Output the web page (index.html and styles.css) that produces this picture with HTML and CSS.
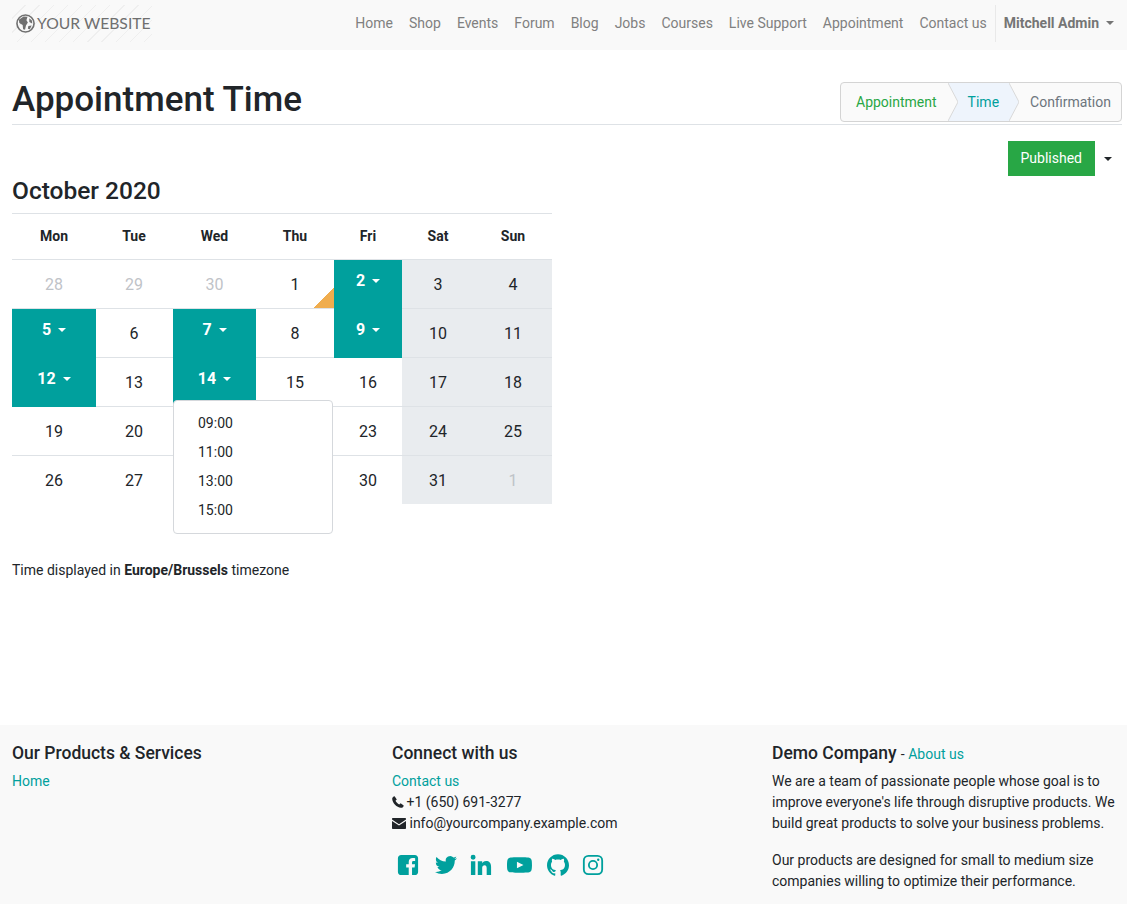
FILE: index.html
```html
<!DOCTYPE html>
<html lang="en">

<head>
    <meta charset="UTF-8">
    <meta name="viewport" content="width=device-width, initial-scale=1.0">
    <title>Appointment Time</title>
    <link rel="stylesheet" href="styles.css">
</head>

<body>
    <header class="navbar">
        <a class="logo" href="#">
            <svg class="logo-globe" viewBox="0 0 20 20">
                <circle cx="10" cy="10" r="9" fill="none" stroke="#707070" stroke-width="1.700"></circle>
                <path d="M3 6 L8 2.500 L12 3 L11 6.500 L12.500 9 L10.500 12 L9.500 16.500 L7.500 16 L7 11.500 L3.500 9.500 Z" fill="#707070"></path>
                <path d="M14 4.500 L17 7 L17 10 L14 8.500 Z M13 12.500 L16.500 12 L14.500 16 L12.500 15.500 Z" fill="#707070"></path>
            </svg>
            <span>YOUR WEBSITE</span>
        </a>
        <nav class="nav-links">
            <a href="#">Home</a>
            <a href="#">Shop</a>
            <a href="#">Events</a>
            <a href="#">Forum</a>
            <a href="#">Blog</a>
            <a href="#">Jobs</a>
            <a href="#">Courses</a>
            <a href="#">Live Support</a>
            <a href="#">Appointment</a>
            <a href="#">Contact us</a>
        </nav>
        <a class="nav-user" href="#">Mitchell Admin<span class="caret"></span></a>
    </header>

    <main class="page">
        <div class="title-row">
            <h1>Appointment Time</h1>
            <div class="wizard">
                <span class="step step-done">Appointment</span>
                <svg class="step-sep" viewBox="0 0 10 40" preserveAspectRatio="none">
                    <path d="M0 0 L10 20 L0 40 Z" fill="#fafafa"></path>
                    <path d="M0 0 L10 0 L10 40 L0 40 L10 20 Z" fill="#eef4fc"></path>
                    <path d="M0 0 L10 20 L0 40" fill="none" stroke="#d8d8d8"></path>
                </svg>
                <span class="step step-active">Time</span>
                <svg class="step-sep" viewBox="0 0 10 40" preserveAspectRatio="none">
                    <path d="M0 0 L10 20 L0 40 Z" fill="#eef4fc"></path>
                    <path d="M0 0 L10 0 L10 40 L0 40 L10 20 Z" fill="#fafafa"></path>
                    <path d="M0 0 L10 20 L0 40" fill="none" stroke="#d8d8d8"></path>
                </svg>
                <span class="step step-last">Confirmation</span>
            </div>
        </div>

        <div class="publish-row">
            <a class="btn-published" href="#">Published</a>
            <span class="caret caret-dark"></span>
        </div>

        <h2>October 2020</h2>
        <table class="calendar">
            <thead>
                <tr>
                    <th>Mon</th><th>Tue</th><th>Wed</th><th>Thu</th><th>Fri</th><th>Sat</th><th>Sun</th>
                </tr>
            </thead>
            <tbody>
                <tr>
                    <td class="muted">28</td>
                    <td class="muted">29</td>
                    <td class="muted">30</td>
                    <td class="today">1</td>
                    <td class="open"><a href="#">2<span class="caret"></span></a></td>
                    <td class="weekend">3</td>
                    <td class="weekend">4</td>
                </tr>
                <tr>
                    <td class="open"><a href="#">5<span class="caret"></span></a></td>
                    <td>6</td>
                    <td class="open"><a href="#">7<span class="caret"></span></a></td>
                    <td>8</td>
                    <td class="open"><a href="#">9<span class="caret"></span></a></td>
                    <td class="weekend">10</td>
                    <td class="weekend">11</td>
                </tr>
                <tr>
                    <td class="open"><a href="#">12<span class="caret"></span></a></td>
                    <td>13</td>
                    <td class="open has-menu">
                        <a href="#">14<span class="caret"></span></a>
                        <div class="time-menu">
                            <a href="#">09:00</a>
                            <a href="#">11:00</a>
                            <a href="#">13:00</a>
                            <a href="#">15:00</a>
                        </div>
                    </td>
                    <td>15</td>
                    <td>16</td>
                    <td class="weekend">17</td>
                    <td class="weekend">18</td>
                </tr>
                <tr>
                    <td>19</td>
                    <td>20</td>
                    <td></td>
                    <td></td>
                    <td>23</td>
                    <td class="weekend">24</td>
                    <td class="weekend">25</td>
                </tr>
                <tr>
                    <td>26</td>
                    <td>27</td>
                    <td></td>
                    <td></td>
                    <td>30</td>
                    <td class="weekend">31</td>
                    <td class="weekend muted">1</td>
                </tr>
            </tbody>
        </table>

        <p class="timezone">Time displayed in <b>Europe/Brussels</b> timezone</p>
    </main>

    <footer class="footer">
        <div class="footer-col">
            <h5>Our Products &amp; Services</h5>
            <a href="#">Home</a>
        </div>
        <div class="footer-col">
            <h5>Connect with us</h5>
            <a href="#">Contact us</a>
            <div class="contact-line">
                <svg class="contact-icon" viewBox="0 0 12 12">
                    <path d="M2.600 0.300 L4.800 3.400 L3.500 4.800 C4.100 6.100 5.700 7.800 7.200 8.500 L8.600 7.200 L11.700 9.400 C11.600 10.700 10.300 11.900 9 11.800 C4.600 11.400 0.500 7.200 0.200 3 C0.100 1.700 1.300 0.400 2.600 0.300 Z" fill="#212529"></path>
                </svg>
                +1 (650) 691-3277
            </div>
            <div class="contact-line">
                <svg class="contact-icon contact-mail" viewBox="0 0 14 11">
                    <path d="M1 0 H13 C13.600 0 14 .4 14 1 V1.600 L7 6.200 L0 1.600 V1 C0 .4 .4 0 1 0 Z M0 3 L7 7.600 L14 3 V10 C14 10.600 13.600 11 13 11 H1 C.4 11 0 10.600 0 10 Z" fill="#212529"></path>
                </svg>
                info@yourcompany.example.com
            </div>
            <div class="social">
                <svg viewBox="0 0 24 24"><path fill-rule="evenodd" d="M4.500 1 H19.500 C21.500 1 23 2.500 23 4.500 V19.500 C23 21.500 21.500 23 19.500 23 H16.400 V14.600 H19.200 L19.700 11.200 H16.400 V9.200 C16.400 8.200 16.800 7.600 18 7.600 H19.800 V4.600 C19.200 4.500 18.200 4.400 17 4.400 C14.500 4.400 12.800 5.900 12.800 8.700 V11.200 H10 V14.600 H12.800 V23 H4.500 C2.500 23 1 21.500 1 19.500 V4.500 C1 2.500 2.500 1 4.500 1 Z"></path></svg>
                <svg viewBox="0 0 24 24"><path d="M23.953 4.57a10 10 0 01-2.825.775 4.958 4.958 0 002.163-2.723c-.951.555-2.005.959-3.127 1.184a4.92 4.92 0 00-8.384 4.482C7.69 8.095 4.067 6.13 1.64 3.162a4.822 4.822 0 00-.666 2.475c0 1.71.87 3.213 2.188 4.096a4.904 4.904 0 01-2.228-.616v.06a4.923 4.923 0 003.946 4.827 4.996 4.996 0 01-2.212.085 4.936 4.936 0 004.604 3.417 9.867 9.867 0 01-6.102 2.105c-.39 0-.779-.023-1.17-.067a13.995 13.995 0 007.557 2.209c9.053 0 13.998-7.496 13.998-13.985 0-.21 0-.42-.015-.63A9.935 9.935 0 0024 4.59z"></path></svg>
                <svg viewBox="0 0 24 24"><path d="M23 23h-4.800v-7.500c0-1.900-.7-3.200-2.300-3.200-1.300 0-2.100.9-2.400 1.700-.1.300-.2.700-.2 1.200V23H8.500V8h4.800v2.100c.6-1 1.800-2.400 4.300-2.400 3.200 0 5.400 2.100 5.400 6.500V23zM3.400 6.200a2.700 2.700 0 110-5.400 2.700 2.700 0 010 5.400zM5.800 23H1V8h4.800v15z"></path></svg>
                <svg class="social-wide" viewBox="0 0 24 24" preserveAspectRatio="none"><path d="M23.498 6.186a3.016 3.016 0 0 0-2.122-2.136C19.505 3.545 12 3.545 12 3.545s-7.505 0-9.377.505A3.017 3.017 0 0 0 .502 6.186C0 8.07 0 12 0 12s0 3.93.502 5.814a3.016 3.016 0 0 0 2.122 2.136c1.871.505 9.376.505 9.376.505s7.505 0 9.377-.505a3.015 3.015 0 0 0 2.122-2.136C24 15.93 24 12 24 12s0-3.93-.502-5.814zM9.545 15.568V8.432L15.818 12l-6.273 3.568z"></path></svg>
                <svg viewBox="0 0 24 24"><path d="M12 .297c-6.63 0-12 5.373-12 12 0 5.303 3.438 9.8 8.205 11.385.6.113.82-.258.82-.577 0-.285-.01-1.04-.015-2.04-3.338.724-4.042-1.61-4.042-1.61C4.422 18.07 3.633 17.7 3.633 17.7c-1.087-.744.084-.729.084-.729 1.205.084 1.838 1.236 1.838 1.236 1.07 1.835 2.809 1.305 3.495.998.108-.776.417-1.305.76-1.605-2.665-.3-5.466-1.332-5.466-5.93 0-1.31.465-2.38 1.235-3.22-.135-.303-.54-1.523.105-3.176 0 0 1.005-.322 3.3 1.23.96-.267 1.98-.399 3-.405 1.02.006 2.04.138 3 .405 2.28-1.552 3.285-1.23 3.285-1.23.645 1.653.24 2.873.12 3.176.765.84 1.23 1.91 1.23 3.22 0 4.61-2.805 5.625-5.475 5.92.42.36.81 1.096.81 2.22 0 1.606-.015 2.896-.015 3.286 0 .315.21.69.825.57C20.565 22.092 24 17.592 24 12.297c0-6.627-5.373-12-12-12"></path></svg>
                <svg viewBox="0 0 24 24">
                    <rect x="2" y="2" width="20" height="20" rx="5" fill="none" stroke="#00a09d" stroke-width="2"></rect>
                    <circle cx="12" cy="12" r="4.500" fill="none" stroke="#00a09d" stroke-width="2"></circle>
                    <circle cx="17.700" cy="6.300" r="1.300"></circle>
                </svg>
            </div>
        </div>
        <div class="footer-col">
            <h5 class="company">Demo Company <small>- <a href="#">About us</a></small></h5>
            <p>We are a team of passionate people whose goal is to improve everyone's life through disruptive products. We build great products to solve your business problems.</p>
            <p>Our products are designed for small to medium size companies willing to optimize their performance.</p>
        </div>
    </footer>
</body>

</html>
```

FILE: styles.css
```css
html,
body {
    height: 904px;
    overflow: hidden;
}

body {
    margin: 0;
    font-family: Roboto, "Noto Sans", sans-serif;
    font-size: 14px;
    line-height: 21px;
    color: #212529;
    background-color: #ffffff;
}

a {
    color: #00a09d;
    text-decoration: none;
}

.caret {
    display: inline-block;
    margin-left: 8px;
    vertical-align: 3px;
    border-top: 4px solid currentColor;
    border-left: 4px solid transparent;
    border-right: 4px solid transparent;
}

/* navbar */
.navbar {
    display: flex;
    align-items: flex-start;
    height: 50px;
    padding: 0 4px 0 12px;
    background-color: #f9f9f9;
}

.logo {
    display: flex;
    align-items: center;
    box-sizing: border-box;
    width: 140px;
    height: 37px;
    margin-top: 5px;
    padding-left: 4px;
    color: #6f6f6f;
    font-family: Lato, sans-serif;
    font-size: 15.7px;
    white-space: nowrap;
    background-image: repeating-linear-gradient(135deg, transparent 0, transparent 9px, #efefef 9px, #efefef 10px);
}

.logo-globe {
    flex: none;
    width: 19px;
    height: 19px;
    margin-right: 2px;
}

.nav-links {
    display: flex;
    margin-left: auto;
    padding-top: 5px;
}

.nav-links a {
    padding: 8px;
    color: #808080;
}

.nav-user {
    display: block;
    margin-top: 5px;
    padding: 8px 9px 8px 8px;
    color: #757575;
    font-weight: 700;
    border-left: 1px solid #e9e9e9;
}

.nav-user .caret {
    margin-left: 7px;
}

/* title and wizard */
.page {
    box-sizing: border-box;
    width: 1110px;
    height: 675px;
    margin-left: 12px;
}

.title-row {
    display: flex;
    justify-content: space-between;
    align-items: flex-start;
    height: 74px;
    border-bottom: 1px solid #dee2e6;
}

h1 {
    margin: 27px 0 0;
    font-size: 35px;
    line-height: 46px;
    font-weight: 500;
}

.wizard {
    display: flex;
    align-items: stretch;
    height: 38px;
    margin-top: 32px;
    border: 1px solid #d4d4d4;
    border-radius: 4px;
    background-color: #fafafa;
}

.step {
    padding: 9px 10px 0;
    color: #6c757d;
}

.step-done {
    padding-left: 15px;
    padding-right: 11px;
    color: #28a745;
}

.step-active {
    color: #00a09d;
    background-color: #eef4fc;
}

.step-last {
    padding-left: 11px;
}

.step-sep {
    width: 10px;
    height: 38px;
}

.publish-row {
    display: flex;
    justify-content: flex-end;
    align-items: center;
    margin-top: 16px;
}

.btn-published {
    padding: 7px 13px;
    color: #ffffff;
    background-color: #28a745;
}

.caret-dark {
    margin: 0 10px 0 9px;
    color: #212529;
}

h2 {
    margin: 0 0 8px;
    font-size: 24.5px;
    line-height: 29px;
    font-weight: 500;
}

/* calendar */
.calendar {
    width: 540px;
    table-layout: fixed;
    border-collapse: separate;
    border-spacing: 0;
    font-size: 16px;
    line-height: 24px;
    text-align: center;
}

.calendar th,
.calendar td {
    box-sizing: border-box;
    height: 49px;
    padding: 2px 0 0;
    border-bottom: 1px solid #dee2e6;
}

.calendar tr:last-child td {
    height: 48px;
    border-bottom: none;
}

.calendar th {
    height: 47px;
    padding: 0 0 2px;
    font-size: 14px;
    font-weight: 700;
    border-top: 1px solid #dee2e6;
}

.calendar th:nth-child(1) { width: 84px; }
.calendar th:nth-child(2) { width: 77px; }
.calendar th:nth-child(3) { width: 83px; }
.calendar th:nth-child(4) { width: 78px; }
.calendar th:nth-child(5) { width: 68px; }
.calendar th:nth-child(6) { width: 75px; }
.calendar th:nth-child(7) { width: 75px; }

.calendar th:nth-child(n+6),
.calendar td:nth-child(n+6) {
    padding-right: 3px;
}

.calendar th:nth-child(2),
.calendar td:nth-child(2) {
    padding-right: 1px;
}

.muted {
    color: #bfc3c8;
}

.weekend {
    background-color: #e9ecef;
}

.today {
    background: linear-gradient(135deg, transparent 50%, #f0ad4e 50%) no-repeat right bottom / 20px 20px;
}

.calendar .open {
    padding: 0;
    vertical-align: top;
    background-color: #00a09d;
    border-bottom-color: #00a09d;
}

.open > a {
    display: block;
    padding-top: 9px;
    color: #ffffff;
    font-weight: 700;
}

.open .caret {
    margin-left: 7px;
}

.has-menu {
    position: relative;
}

.time-menu {
    position: absolute;
    top: 42px;
    left: 0;
    z-index: 5;
    box-sizing: border-box;
    width: 160px;
    height: 134px;
    padding: 8px 0;
    font-size: 14px;
    line-height: 21px;
    text-align: left;
    background-color: #ffffff;
    border: 1px solid #d5d8dc;
    border-radius: 4px;
}

.time-menu a {
    display: block;
    padding: 4px 24px;
    color: #212529;
}

.timezone {
    margin: 56px 0 0;
}

/* footer */
.footer {
    display: flex;
    box-sizing: border-box;
    height: 179px;
    padding: 18px 0 0 12px;
    background-color: #f9f9f9;
}

.footer-col {
    width: 380px;
}

.footer-col:last-child {
    width: 345px;
}

h5 {
    margin: 0 0 7px;
    font-size: 17.5px;
    line-height: 21px;
    font-weight: 500;
}

h5.company {
    margin-bottom: 6px;
}

h5 small {
    font-size: 14px;
    font-weight: 400;
}

.footer-col p {
    margin: 0 0 16px;
}

.contact-icon {
    display: inline-block;
    width: 12px;
    height: 12px;
    margin-right: -1px;
    vertical-align: -1px;
}

.contact-mail {
    width: 14px;
    height: 11px;
    margin-right: 0;
}

.social {
    display: flex;
    gap: 15px;
    margin: 20px 0 0 5px;
}

.social svg {
    width: 22px;
    height: 22px;
    fill: #00a09d;
}

.social svg:nth-child(2) {
    margin-left: 1px;
}

.social svg:nth-child(3),
.social svg:nth-child(6) {
    margin-left: -2px;
}

.social .social-wide {
    width: 25px;
}
```
